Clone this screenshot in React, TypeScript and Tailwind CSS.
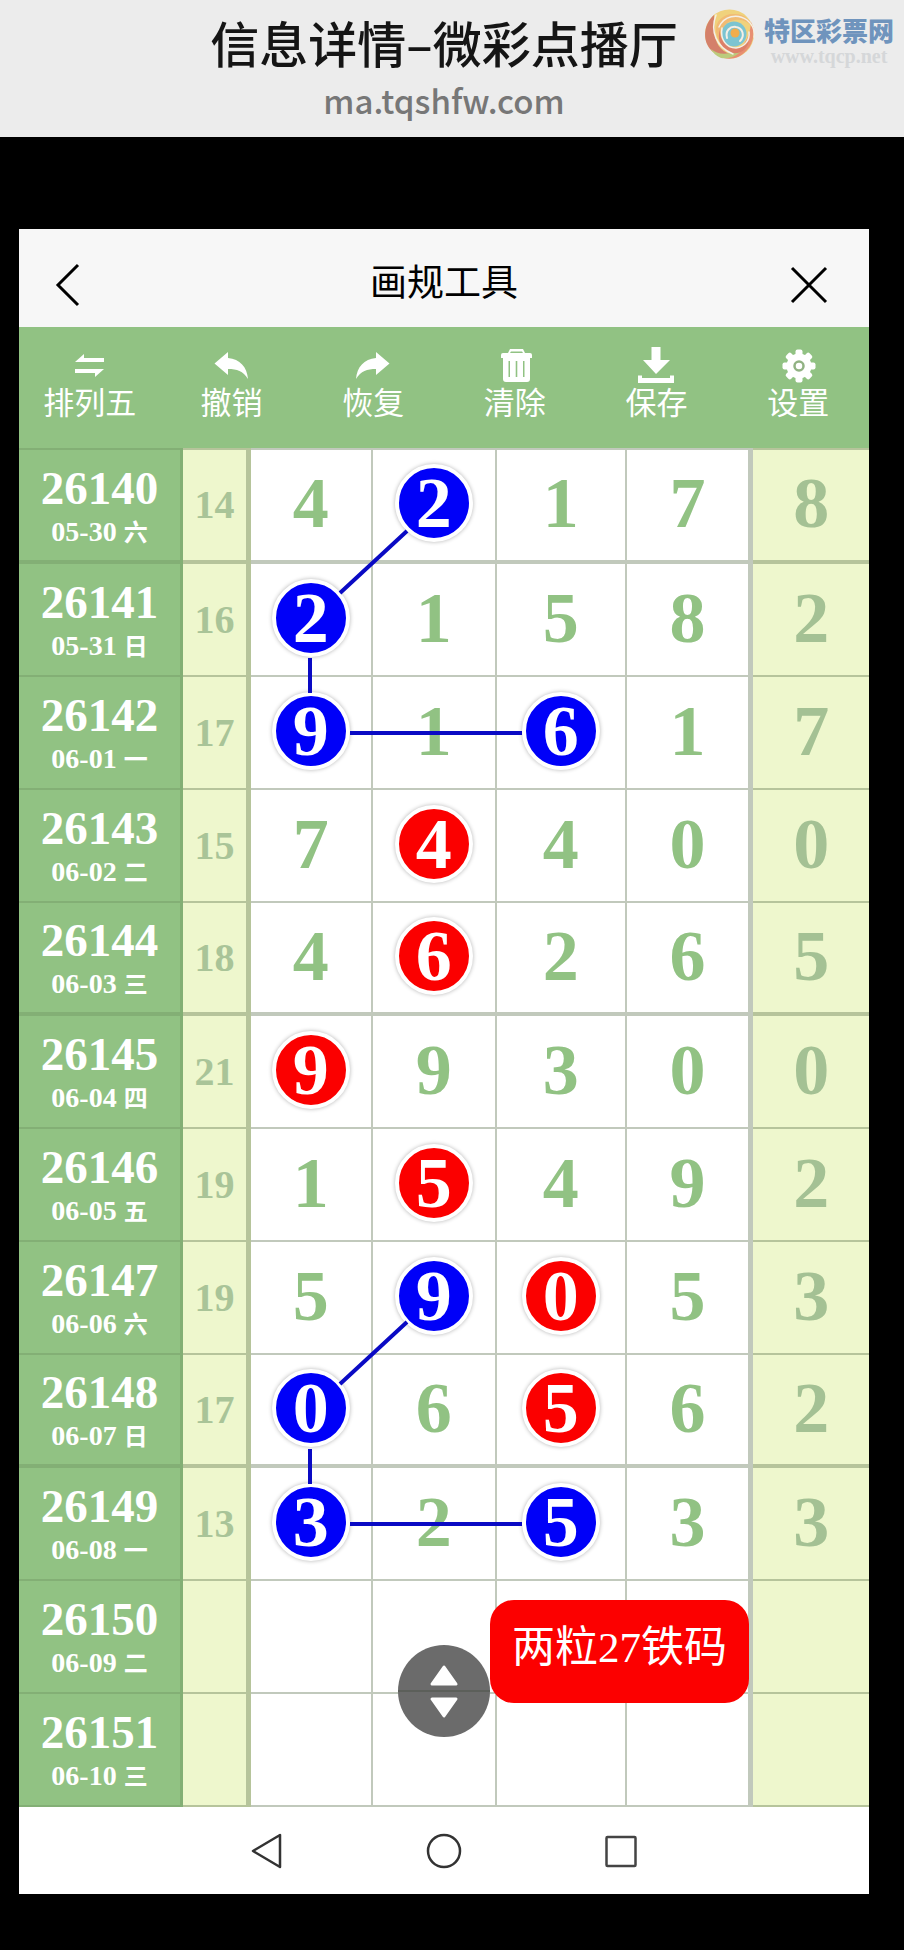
import type { ReactNode } from "react";

type Mark = "blue" | "red";

type Draw = {
  issue: string;
  date: string;
  day: string;
  sum?: number;
  nums: number[];
  marks?: Record<number, Mark>;
  thick?: boolean;
};

const draws: Draw[] = [
  { issue: "26140", date: "05-30", day: "六", sum: 14, nums: [4, 2, 1, 7, 8], marks: { 1: "blue" }, thick: true },
  { issue: "26141", date: "05-31", day: "日", sum: 16, nums: [2, 1, 5, 8, 2], marks: { 0: "blue" } },
  { issue: "26142", date: "06-01", day: "一", sum: 17, nums: [9, 1, 6, 1, 7], marks: { 0: "blue", 2: "blue" } },
  { issue: "26143", date: "06-02", day: "二", sum: 15, nums: [7, 4, 4, 0, 0], marks: { 1: "red" } },
  { issue: "26144", date: "06-03", day: "三", sum: 18, nums: [4, 6, 2, 6, 5], marks: { 1: "red" }, thick: true },
  { issue: "26145", date: "06-04", day: "四", sum: 21, nums: [9, 9, 3, 0, 0], marks: { 0: "red" } },
  { issue: "26146", date: "06-05", day: "五", sum: 19, nums: [1, 5, 4, 9, 2], marks: { 1: "red" } },
  { issue: "26147", date: "06-06", day: "六", sum: 19, nums: [5, 9, 0, 5, 3], marks: { 1: "blue", 2: "red" } },
  { issue: "26148", date: "06-07", day: "日", sum: 17, nums: [0, 6, 5, 6, 2], marks: { 0: "blue", 2: "red" }, thick: true },
  { issue: "26149", date: "06-08", day: "一", sum: 13, nums: [3, 2, 5, 3, 3], marks: { 0: "blue", 2: "blue" } },
  { issue: "26150", date: "06-09", day: "二", nums: [] },
  { issue: "26151", date: "06-10", day: "三", nums: [] },
];

const ARROW = "M1.5 16.5 15 5v6c12 1 19 9 20 21-5-8-11-10-20-10v6z";

const tools: { name: string; icon: ReactNode }[] = [
  {
    name: "排列五",
    icon: <path d="M3 15 12 7v4h20v4zM32 22l-9 8v-4H3v-4z" />,
  },
  { name: "撤销", icon: <path d={ARROW} /> },
  { name: "恢复", icon: <path d={ARROW} transform="matrix(-1 0 0 1 36 0)" /> },
  {
    name: "清除",
    icon: (
      <path
        fillRule="evenodd"
        d="M13 2h13l2 4h5a2 2 0 0 1 2 2v3h-2v21a3 3 0 0 1-3 3H9a3 3 0 0 1-3-3V11H4V8a2 2 0 0 1 2-2h5zM14 4.500l-1 1.500h13l-1-1.500zM11.500 14v16H13V14zM18.700 14v16h1.600V14zM26 14v16h1.500V14z"
      />
    ),
  },
  {
    name: "保存",
    icon: <path d="M13.500 0h9v13H32L18 27 5 13h8.500zM0 28.500h4V31h28v-2.500h4V36H0z" />,
  },
  {
    name: "设置",
    icon: (
      <>
        <circle cx="19" cy="19" r="12.500" />
        {[0, 45, 90, 135].map((deg) => (
          <rect key={deg} x="15.500" y="2.500" width="7" height="33" rx="2" transform={`rotate(${deg} 19 19)`} />
        ))}
        <circle cx="19" cy="19" r="4.500" fill="none" stroke="#91b283" strokeWidth="2.500" />
      </>
    ),
  },
];

// marker lines, in the units of the 850 x 1359 grid
const links = [
  "M388 83 321 145M291 210v35M331 285h172",
  "M388 874 321 936M291 1001v35M331 1076h172",
];

function SiteLogo() {
  return (
    <a href="#" className="absolute top-2 right-2.5 flex gap-2">
      <svg viewBox="5 5 52 52" className="size-13" fill="none" stroke="#f4efe6" strokeLinecap="round">
        <g stroke="none">
          <circle cx="30.500" cy="31" r="24.500" fill="#f0d27c" />
          <path d="M15 12C4 22 3 39 13 48c8 6 16 7 24 5-13-3-20-10-21-21-1-8-1-14-1-20z" fill="#d4806a" />
          <path d="M52 19c6 13 1 28-13 35-5 2-10 2-14 1 16-4 26-18 27-36z" fill="#e88f72" />
          <path d="M12 46c9 8 25 6 36-7-4 11-15 18-26 16-5-2-8-5-10-9z" fill="#bccb7c" />
          <path d="M17 28c-1-10 8-18 19-17 9 0 16 6 19 15-5-7-12-10-19-9-9 1-14 8-13 16 1 7 6 12 13 13-10 1-18-7-19-18z" fill="#f1bb74" />
          <path d="M21 26c-1 10 6 19 17 19 6-1 10-4 12-8-1 9-8 14-16 13-9-1-17-10-13-24z" fill="#dc8068" />
          <circle cx="35" cy="31" r="12.500" fill="#7cc4d1" />
        </g>
        <path d="M17 12c-6 16 0 32 17 39" strokeWidth="1.500" />
        <path d="M20 24c5-11 18-14 28-7 6 5 8 11 7 17" strokeWidth="1.500" />
        <path d="M23 25c-2 11 4 20 14 20 9-1 14-8 13-16" strokeWidth="1.500" />
        <path d="M28 35c-2-7 3-12 9-11 7 1 9 9 4 14" strokeWidth="2" />
        <circle cx="36" cy="30" r="4.500" fill="#f2ad4c" stroke="none" />
      </svg>
      <span className="flex flex-col pt-2">
        <span className="font-['Noto_Sans_CJK_SC',sans-serif] text-[26px] leading-7 font-black text-[#6f94bd]">
          特区彩票网
        </span>
        <span className="text-center font-['Liberation_Serif',serif] text-[20px] leading-6 font-bold text-[#d5d7d9]">
          www.tqcp.net
        </span>
      </span>
    </a>
  );
}

function Ball({ value, mark }: { value: number; mark: Mark }) {
  return (
    <span
      className={`mx-auto flex size-[78px] items-center justify-center rounded-full border-4 border-white text-white shadow-[0_0_4px_rgba(0,0,0,0.3)] ${
        mark === "blue" ? "bg-[#0000f8]" : "bg-[#fb0000]"
      }`}
    >
      {value}
    </span>
  );
}

function DrawRow({ draw, first }: { draw: Draw; first: boolean }) {
  const line = `${draw.thick ? "border-b-4" : "border-b-2"} ${first ? "border-t-2" : ""}`;

  return (
    <tr className={first ? "h-[116px]" : "h-[113px]"}>
      <th
        scope="row"
        className={`${line} border-r-3 border-[#4c6440]/20 bg-[#91c283] p-0 pt-1.5 text-center font-bold text-white`}
      >
        <span className="block text-[47px] leading-12">{draw.issue}</span>
        <span className="block text-[28px] leading-10">
          {draw.date} <span className="text-[24px]">{draw.day}</span>
        </span>
      </th>
      <td
        className={`${line} border-r-5 border-[#4c6440]/35 bg-[#eef7cd] p-0 text-center text-[40px] leading-10 font-bold text-[#a9c498]`}
      >
        {draw.sum}
      </td>
      {[0, 1, 2, 3, 4].map((i) => (
        <td
          key={i}
          className={`${line} border-[#4c6440]/35 p-0 pb-1 text-center text-[72px] leading-[78px] font-bold ${
            i === 4 ? "bg-[#eef7cd] text-[#a4c194]" : "bg-white text-[#91c283]"
          } ${i === 3 ? "border-r-5" : i < 3 ? "border-r-2" : ""}`}
        >
          {draw.marks?.[i] ? <Ball value={draw.nums[i]} mark={draw.marks[i]} /> : draw.nums[i]}
        </td>
      ))}
    </tr>
  );
}

export default function App() {
  return (
    <div className="min-h-screen bg-black font-['Liberation_Serif','Noto_Sans_CJK_SC',serif]">
      {/* BROWSER BAR */}
      <header className="relative bg-[#ececec] pt-2.5 pr-4 pb-[13px] text-center">
        <h1 className="mx-auto w-fit pb-0.5 font-['Noto_Sans_CJK_SC',sans-serif] text-[49px] leading-16 font-medium text-[#151515]">
          信息详情–微彩点播厅
        </h1>
        <p className="font-['Noto_Sans_CJK_SC',sans-serif] text-[33px] leading-12 font-medium text-[#777]">
          ma.tqshfw.com
        </p>
        <SiteLogo />
      </header>

      <main className="mt-[92px] mr-[35px] ml-[19px] bg-white">
        {/* TITLE */}
        <div className="flex h-[98px] items-center bg-[#f7f7f7] px-8 pt-3">
          <button aria-label="返回" className="size-12">
            <svg viewBox="0 0 48 48" className="size-12" fill="none" stroke="#000" strokeWidth="3">
              <path d="M27 5 7 25l20 20" />
            </svg>
          </button>
          <h2 className="flex-1 pb-2 text-center font-['Noto_Sans_CJK_SC',sans-serif] text-[37px] leading-12 text-black">
            画规工具
          </h2>
          <button aria-label="关闭" className="size-12">
            <svg viewBox="0 0 48 48" className="size-12" fill="none" stroke="#000" strokeWidth="3">
              <path d="m3 8 34 34M37 8 3 42" />
            </svg>
          </button>
        </div>

        {/* TOOLBAR */}
        <div className="grid h-[121px] grid-cols-6 bg-[#91c283] pt-5">
          {tools.map((tool) => (
            <button
              key={tool.name}
              className="flex flex-col items-center font-['Noto_Sans_CJK_SC',sans-serif] text-[31px] leading-9 text-white"
            >
              <svg viewBox="0 0 36 36" className="size-9" fill="currentColor">
                {tool.icon}
              </svg>
              {tool.name}
            </button>
          ))}
        </div>

        {/* CHART */}
        <div className="relative">
          <table className="w-full table-fixed border-separate border-spacing-0">
            <colgroup>
              <col className="w-[19.3%]" />
              <col className="w-[8%]" />
              <col className="w-[14.3%]" />
              <col className="w-[14.6%]" />
              <col className="w-[15.3%]" />
              <col className="w-[14.9%]" />
              <col className="w-[13.6%]" />
            </colgroup>
            <tbody>
              {draws.map((draw, i) => (
                <DrawRow key={draw.issue} draw={draw} first={i === 0} />
              ))}
            </tbody>
          </table>

          <svg
            viewBox="0 0 850 1359"
            preserveAspectRatio="none"
            className="pointer-events-none absolute inset-0 size-full"
            fill="none"
            stroke="#0a0ac4"
            strokeWidth="4"
          >
            {links.map((d) => (
              <path key={d} d={d} />
            ))}
          </svg>

          <button
            aria-label="上下滚动"
            className="absolute bottom-[70px] left-1/2 size-[92px] -translate-x-1/2 rounded-full bg-[#6b6b6b]"
          >
            <svg viewBox="0 0 92 92" className="size-full" fill="#fff" stroke="#fff" strokeWidth="3" strokeLinejoin="round">
              <path d="m46 22 12 17H34zM46 71l12-17H34z" />
              <path d="M0 46h92" stroke="#5c5f5a" strokeWidth="2" />
            </svg>
          </button>

          <div className="absolute right-[120px] bottom-[104px] rounded-3xl bg-[#fc0000] px-[22px] pt-5 pb-[27px] text-[43px] leading-14 text-white">
            两粒27铁码
          </div>
        </div>

        {/* SYSTEM KEYS */}
        <nav className="flex h-[87px] items-center justify-center gap-[141px]">
          <button aria-label="后退">
            <svg viewBox="0 0 36 36" className="size-9" fill="none" stroke="#333" strokeWidth="2.500" strokeLinejoin="round">
              <path d="M31 2v32L4 18z" />
            </svg>
          </button>
          <button aria-label="主页">
            <svg viewBox="0 0 36 36" className="size-9" fill="none" stroke="#333" strokeWidth="2.500">
              <circle cx="18" cy="18" r="16" />
            </svg>
          </button>
          <button aria-label="最近任务">
            <svg viewBox="0 0 36 36" className="size-9" fill="none" stroke="#444" strokeWidth="2.500">
              <rect x="3.500" y="4" width="29" height="29" rx="1" />
            </svg>
          </button>
        </nav>
      </main>
    </div>
  );
}
